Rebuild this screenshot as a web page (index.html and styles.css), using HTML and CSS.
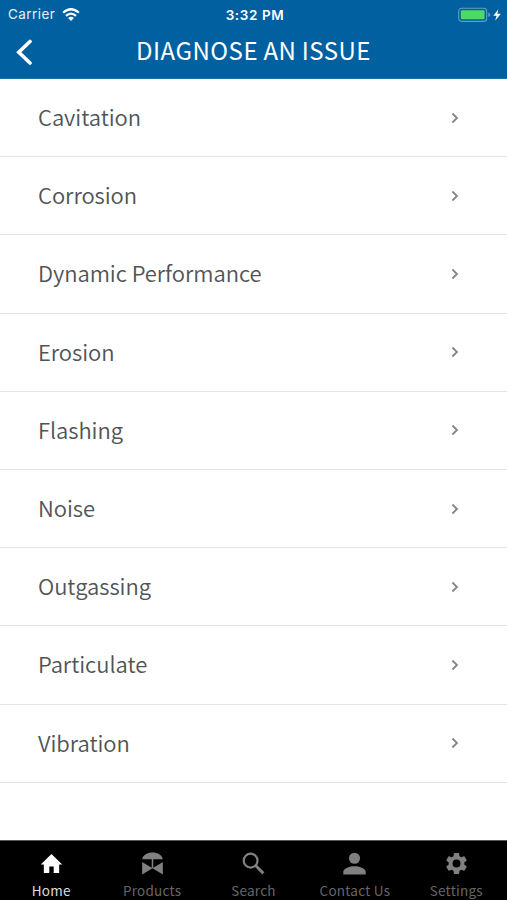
FILE: index.html
```html
<!DOCTYPE html>
<html lang="en">
<head>
<meta charset="utf-8">
<title>Diagnose an Issue</title>
<link rel="stylesheet" href="styles.css">
</head>
<body>
<svg class="defs" width="0" height="0" aria-hidden="true">
  <symbol id="chevron" viewBox="0 0 8 12"><path d="M1.4 1.500 6 6 1.400 10.500" fill="none" stroke="currentColor" stroke-width="1.800"/></symbol>
</svg>
<div class="app">
  <header class="header">
    <div class="status">
      <div class="status-left"><span class="carrier">Carrier</span>
        <svg class="wifi" viewBox="0 0 18 13" width="18" height="13"><g fill="none" stroke="#fff" stroke-width="2.2"><path d="M1.2 4.7Q9-2.2 16.8 4.7"/><path d="M4 7.9Q9 3.5 14 7.9"/></g><path d="M6.1 10Q9 7.6 11.9 10L9 13Z" fill="#fff"/></svg>
      </div>
      <span class="time">3:32 PM</span>
      <div class="status-right">
        <svg viewBox="0 0 44 16" width="44" height="16"><rect x=".7" y="1.2" width="28" height="13.2" rx="3" fill="none" stroke="#659bc5" stroke-width="1.1"/><rect x="2.8" y="3.3" width="23.8" height="9" rx="1" fill="#4cd964"/><path d="M30.3 5.6q1.9.5 1.9 2.2t-1.9 2.2z" fill="#659bc5"/><path d="M40.4 2.300 35.300 8.800h3.300l-1.500 5 5.800-7.100h-3.600z" fill="#fff"/></svg>
      </div>
    </div>
    <div class="titlebar">
      <svg class="back" viewBox="0 0 18 28" width="18" height="28"><path d="M16 3.500 4.800 14.300 16 25" fill="none" stroke="#fff" stroke-width="3.600" stroke-linecap="round" stroke-linejoin="miter"/></svg>
      <h1 class="title">DIAGNOSE AN ISSUE</h1>
    </div>
  </header>
  <main class="list">
    <a class="row"><span>Cavitation</span><svg class="chev"><use href="#chevron"/></svg></a>
    <a class="row"><span>Corrosion</span><svg class="chev"><use href="#chevron"/></svg></a>
    <a class="row"><span>Dynamic Performance</span><svg class="chev"><use href="#chevron"/></svg></a>
    <a class="row"><span>Erosion</span><svg class="chev"><use href="#chevron"/></svg></a>
    <a class="row"><span>Flashing</span><svg class="chev"><use href="#chevron"/></svg></a>
    <a class="row"><span>Noise</span><svg class="chev"><use href="#chevron"/></svg></a>
    <a class="row"><span>Outgassing</span><svg class="chev"><use href="#chevron"/></svg></a>
    <a class="row"><span>Particulate</span><svg class="chev"><use href="#chevron"/></svg></a>
    <a class="row"><span>Vibration</span><svg class="chev"><use href="#chevron"/></svg></a>
  </main>
  <nav class="tabs">
    <a class="tab active"><svg viewBox="0 0 24 24"><path d="M12 2 .800 13H4v9h5.700v-7h4.600v7H20v-9h3.200z" fill="currentColor"/></svg><span>Home</span></a>
    <a class="tab"><svg viewBox="0 0 24 24"><path d="M1.200 7.500C2.200 3.200 6.500.600 12 .600S21.800 3.200 22.800 7.500zM11.200 7h1.600v10h-1.600zM1.200 10.500 12 17 22.800 10.500V23.500L12 17 1.200 23.500z" fill="currentColor"/></svg><span>Products</span></a>
    <a class="tab"><svg viewBox="0 0 24 24"><circle cx="9" cy="9" r="7.200" fill="none" stroke="currentColor" stroke-width="2.300"/><path d="M14.200 14.200 22.300 22.300" stroke="currentColor" stroke-width="3"/></svg><span>Search</span></a>
    <a class="tab"><svg viewBox="0 0 24 24"><circle cx="12" cy="6.500" r="5.800" fill="currentColor"/><path d="M.300 23.500v-2.800C.300 16.900 7.500 14.800 12 14.800s11.700 2.100 11.700 5.900v2.800z" fill="currentColor"/></svg><span>Contact Us</span></a>
    <a class="tab"><svg viewBox="1 1 22 22"><path d="M19.430 12.980c.040-.320.070-.640.070-.980s-.030-.660-.070-.980l2.110-1.650c.190-.150.240-.420.120-.640l-2-3.460c-.120-.220-.390-.300-.610-.220l-2.490 1c-.520-.400-1.080-.730-1.690-.980l-.380-2.650C14.460 2.180 14.250 2 14 2h-4c-.250 0-.460.180-.490.420l-.380 2.650c-.610.250-1.170.590-1.690.980l-2.490-1c-.230-.090-.490 0-.610.220l-2 3.460c-.130.220-.070.490.120.640l2.110 1.650c-.040.320-.070.650-.070.980s.030.660.070.980l-2.110 1.650c-.190.150-.240.420-.120.640l2 3.460c.120.220.390.300.610.220l2.490-1c.520.400 1.080.730 1.690.980l.380 2.650c.030.240.240.420.490.420h4c.250 0 .460-.180.490-.420l.380-2.650c.610-.250 1.170-.590 1.690-.980l2.490 1c.230.090.490 0 .610-.220l2-3.460c.120-.220.070-.490-.120-.640zM12 15.800a3.800 3.800 0 1 1 0-7.600 3.800 3.800 0 0 1 0 7.600z" fill="currentColor"/></svg><span>Settings</span></a>
  </nav>
</div>
</body>
</html>
```
FILE: styles.css
```css
* { box-sizing: border-box; }
body { margin: 0; background: #fff; font-family: "Noto Sans CJK SC", "Noto Sans", sans-serif; }
.defs { display: block; height: 0; }
.app { display: flex; flex-direction: column; width: 507px; height: 900px; overflow: hidden; }
.header { flex: none; height: 79px; background: #0060a0; color: #fff; border-bottom: 1px solid #1b72ab; }
.status { display: grid; grid-template-columns: 1fr auto 1fr; align-items: center; height: 27px; padding: 0 5px 0 8px; font: 13.5px/27px Inter, sans-serif; }
.status-left { display: flex; align-items: center; gap: 7px; }
.carrier { letter-spacing: .45px; color: #e4f0f8; }
.wifi { display: block; }
.time { font-weight: 600; font-size: 13.5px; letter-spacing: .6px; }
.status-left { padding-bottom: 1px; }
.carrier, .time { padding-top: 1px; }
.status-right { display: flex; justify-content: flex-end; }
.titlebar { display: grid; grid-template-columns: 34px 1fr 34px; align-items: center; height: 50px; padding: 0 14px; }
.title { margin: 0; padding-bottom: 4px; text-align: center; font-size: 24px; line-height: 46px; font-weight: 400; letter-spacing: .5px; word-spacing: -.5px; white-space: nowrap; }
.list { flex: 1; }
.row { display: flex; align-items: center; justify-content: space-between; height: 78.2px; padding: 0 48px 0 38px; border-bottom: 1.5px solid #e4e4e4; color: #505457; font-size: 22px; line-height: 30px; letter-spacing: -.05px; font-weight: 350; }
.row span { padding-bottom: 3px; }
.chev { width: 8px; height: 12px; color: #858585; }
.tabs { flex: none; display: grid; grid-template-columns: repeat(5, 1fr); height: 60px; background: #000; border-top: 1px solid #555; }
.tab { display: flex; flex-direction: column; align-items: center; padding-top: 11px; color: #808080; }
.tab svg { width: 23px; height: 23px; }
.tab.active { padding-left: 1px; }
.tab span { font-size: 13.5px; line-height: 20px; margin-top: 5px; letter-spacing: .25px; white-space: nowrap; color: #666; }
.tab.active { color: #fff; }
.tab.active span { color: #ddd; }
```
